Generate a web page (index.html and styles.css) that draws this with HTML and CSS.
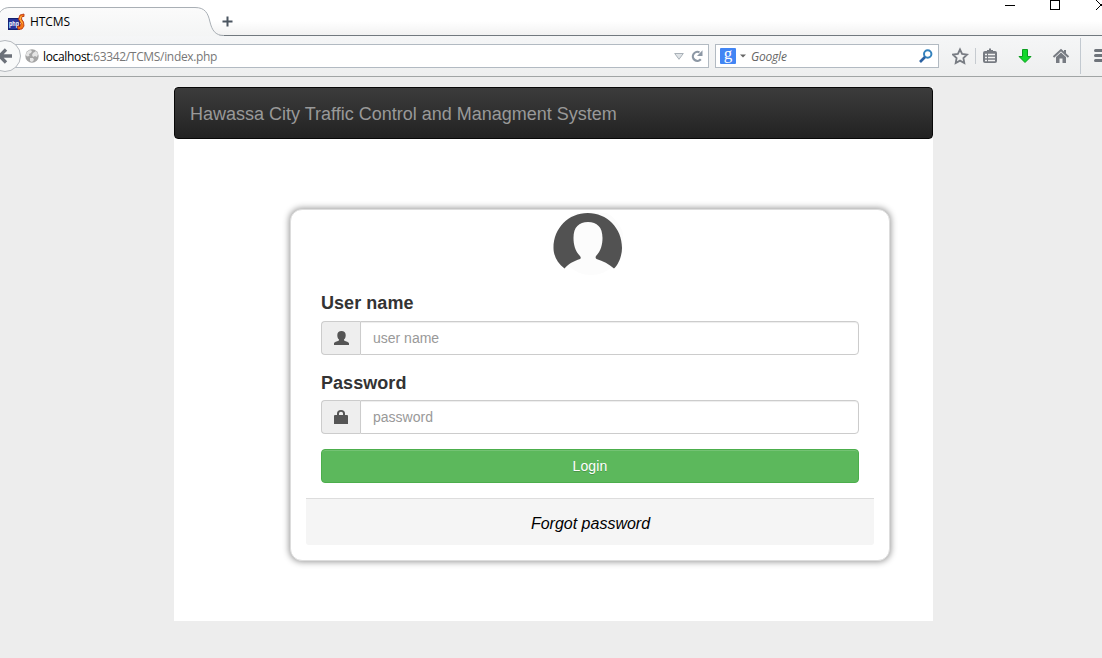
FILE: index.html
```html
<!DOCTYPE html>
<html lang="en">
<head>
<meta charset="utf-8">
<title>HTCMS</title>
<link rel="stylesheet" href="styles.css">
</head>
<body>
<header class="tabstrip">
  <div class="tab">
    <svg class="tab-shape" width="224" height="36" viewBox="0 0 224 36">
      <defs><linearGradient id="tabfill" x1="0" y1="0" x2="0" y2="1"><stop offset="0" stop-color="#fbfbfb"/><stop offset="1" stop-color="#f4f5f5"/></linearGradient></defs>
      <path d="M-2 15C1 10 4 7.5 10 7.5H195C205 7.5 208 13 210 22C212 30 215 35.5 222 35.5V36H-2Z" fill="url(#tabfill)"/>
      <path d="M-2 15C1 10 4 7.5 10 7.5H195C205 7.5 208 13 210 22C212 30 215 35.5 224 35.5" fill="none" stroke="#a9afb5"/>
    </svg>
    <svg class="favicon" width="17" height="18" viewBox="0 0 17 18">
      <rect x="0.5" y="5.500" width="11" height="11" fill="#28349b" stroke="#14206e"/>
      <text class="favicon-text" x="1" y="13" textLength="10" lengthAdjust="spacingAndGlyphs">php</text>
      <path d="M16 1L12 2L10.500 6L13 10.500L12 13.500L9.500 13L10 16.500L14 16L16 13L15.500 9L13.500 6L14 3.500H16Z" fill="#f57a16" stroke="#b62c0b" stroke-width=".8"/>
      <path d="M13.300 3L12 6.500L14.500 10.500" fill="none" stroke="#ffc24a"/>
    </svg>
    <span class="tab-title">HTCMS</span>
  </div>
  <svg class="plus" width="11" height="11" viewBox="0 0 11 11"><path d="M5.500 .5V10.500M.5 5.500H10.500" stroke="#4b5560" stroke-width="2"/></svg>
  <svg class="window-buttons" width="97" height="12" viewBox="0 0 97 12" shape-rendering="crispEdges">
    <path d="M0 5.500H10" stroke="#000"/><rect x="45.500" y=".5" width="9" height="9" fill="none" stroke="#000"/>
    <path d="M91 0L101 10M101 0L91 10" stroke="#000"/>
  </svg>
</header>
<nav class="toolbar">
  <svg class="back" width="22" height="34" viewBox="0 0 22 34">
    <circle cx="5" cy="17" r="15.500" fill="#f8f9f9" stroke="#b4b8bd"/>
    <path d="M0 17H12M6 10.500L-.5 17L6 23.500" fill="none" stroke="#6c7179" stroke-width="3.300"/>
  </svg>
  <div class="url">
    <svg width="14" height="14" viewBox="0 0 14 14"><circle cx="7" cy="7" r="6.700" fill="#a5a5a5"/><path d="M2 3L5 1L7 2L6 4L4 5L4.500 7L2 7.500L.7 6ZM8 4L11 2L13 5L12 8L10 7L8 8L7 6ZM5 9L8 9L9 11L7 13L5 12Z" fill="#e5e5e5"/></svg>
    <span class="address"><b>localhost</b>:63342/TCMS/index.php</span>
    <svg class="url-arrow" width="10" height="7" viewBox="0 0 10 7"><path d="M.7 .5H9.300L5 6.300Z" fill="#dfe3e6" stroke="#a9b1b8"/></svg>
    <svg class="reload" width="12" height="12" viewBox="0 0 12 12"><path d="M9.800 9.300A4.500 4.500 0 1 1 8.500 2.400" fill="none" stroke="#8d98a5" stroke-width="2.200"/><path d="M11.500 .3V6H6Z" fill="#8d98a5"/></svg>
  </div>
  <div class="search">
    <span class="engine">g</span>
    <svg class="caret" width="6" height="4" viewBox="0 0 6 4"><path d="M0 .5H6L3 3.500Z" fill="#666"/></svg>
    <span class="search-text">Google</span>
    <svg class="magnifier" width="14" height="14" viewBox="0 0 14 14"><circle cx="8.700" cy="5" r="3.700" fill="none" stroke="#3482bd" stroke-width="2"/><path d="M6 8L1 13" stroke="#2c61a2" stroke-width="2.600"/></svg>
  </div>
  <svg class="tools" width="150" height="38" viewBox="952 37 150 38">
    <path d="M960 49.500L962.100 54L967 54.600L963.400 58L964.300 63L960 60.600L955.700 63L956.600 58L953 54.600L957.900 54Z" fill="none" stroke="#787c83" stroke-width="1.800"/>
    <path d="M975.500 48V64" stroke="#c6cbd0"/>
    <rect x="983" y="51" width="14" height="12" rx="2" fill="#777b82"/><path d="M987 52V50H989V48.500H991V50H993V52Z" fill="#777b82"/>
    <path d="M985 54.500H987M988 54.500H995M985 57.500H987M988 57.500H995M985 60.500H987M988 60.500H995" stroke="#f2f2f2" stroke-width="1.500"/>
    <path d="M1022.500 49.500H1027.500V56.500H1031L1025 62.500L1019 56.500H1022.500Z" fill="#13d82c" stroke="#0c9d1f"/>
    <path d="M1053.500 57L1061 50L1068.500 57" fill="none" stroke="#777b82" stroke-width="2"/>
    <path d="M1056 57L1061 52.500L1066 57V63H1062.500V58.500H1059.500V63H1056ZM1064 50H1066V54L1064 52Z" fill="#777b82"/>
    <path d="M1080.500 38V74" stroke="#c2c9d0"/>
    <path d="M1095.500 50.500H1104M1095.500 55.500H1104M1095.500 60.500H1104" stroke="#6f747b" stroke-width="3" stroke-linecap="round"/>
  </svg>
</nav>
<main class="container">
  <div class="navbar">Hawassa City Traffic Control and Managment System</div>
  <form class="card">
    <svg class="avatar" width="70" height="62" viewBox="0 0 70 62">
      <circle cx="38" cy="29" r="33" fill="#fcfcfc"/>
      <path d="M11.500 55.500C4 50 .5 42 .5 35C.5 15 15.500 0 34.750 0S69 15 69 35C69 42 66 51 61 55.500C56 51 50 48 43.500 46Q42 45 43 43C48 38 49.500 31 49.500 25C49.500 14 44 9 35 9C26 9 20.500 14 20.500 25C20.500 31 22 38 27 43Q28.500 45 27 46C21 48 15 51 11.500 55.500Z" fill="#525252"/>
    </svg>
    <label class="label" for="user">User name</label>
    <div class="group">
      <span class="addon"><svg width="15" height="14" viewBox="0 0 15 14"><path d="M0 14V12.500C0 11 3 10.500 5 9.500V8.500C3.800 7.500 3.300 6 3.300 4C3.300 1.500 5 0 7.500 0S11.700 1.500 11.700 4C11.700 6 11.200 7.500 10 8.500V9.500C12 10.500 15 11 15 12.500V14Z" fill="#555"/></svg></span>
      <input class="input" id="user" type="text" placeholder="user name">
    </div>
    <label class="label" for="pass">Password</label>
    <div class="group">
      <span class="addon"><svg width="14" height="14" viewBox="0 0 14 14"><path d="M1 5H3V3.500Q3 0 7 0T11 3.500V5H13Q14 5 14 6V14H0V6Q0 5 1 5ZM5 5H9V3.500Q9 1.700 7 1.700T5 3.500Z" fill="#555" fill-rule="evenodd"/></svg></span>
      <input class="input" id="pass" type="password" placeholder="password">
    </div>
    <button class="login" type="button">Login</button>
    <div class="footer">Forgot password</div>
  </form>
</main>
</body>
</html>
```
FILE: styles.css
```css
* { box-sizing: border-box; }
body { margin: 0; height: 658px; overflow: hidden; background: #ededed; font-family: "Liberation Sans", Arial, sans-serif; }
svg { display: block; flex: none; }
.tabstrip { height: 36px; display: flex; background: linear-gradient(#fff 60%, #f2f2f2); border-bottom: 1px solid #72797f; }
.tab { position: relative; width: 221px; height: 36px; display: flex; align-items: flex-start; padding: 13px 0 0 8px; }
.tab-shape { position: absolute; left: 0; top: 0; }
.favicon { position: relative; margin-right: 5px; }
.favicon-text { fill: #fff; font: bold 8px "Liberation Sans", Arial, sans-serif; }
.tab-title { position: relative; font: 12px/18px "Open Sans", sans-serif; letter-spacing: -0.05px; color: #000; }
.plus { margin: 16px 0 0 1px; }
.window-buttons { margin-left: auto; }
.toolbar { height: 41px; display: flex; align-items: flex-start; background: linear-gradient(#f5f6f7, #eeefef); border-bottom: 1px solid #a1a5a5; }
.back { position: relative; margin-top: 3px; }
.url, .search { height: 24px; margin-top: 8px; display: flex; align-items: center; background: #fff; border: 1px solid #b2bac2; }
.url { width: 694px; margin-left: -7px; padding: 0 5px 0 10px; border-left: 0; }
.address { margin: 0 auto 0 4px; padding-top: 2px; font: 12px/20px "Open Sans", sans-serif; letter-spacing: -0.33px; color: #777; }
.address b { font-weight: 400; color: #000; }
.reload { margin-left: 7px; }
.search { width: 224px; margin-left: 6px; padding: 0 5px 0 4px; }
.engine { width: 16px; height: 16px; border-radius: 1px; background: #4285f4; color: #fff; font: 17px/12px "Liberation Serif", serif; text-align: center; }
.caret { margin: 0 5px 0 4px; }
.search-text { padding-top: 2px; font: italic 12px/20px "Open Sans", sans-serif; letter-spacing: -0.2px; color: #666; }
.magnifier { margin-left: auto; }
.tools { margin: 1px 0 0 13px; }
.container { width: 759px; height: 534px; margin: 10px 0 0 174px; background: #fff; }
.navbar { height: 52px; padding-left: 15px; border: 1px solid #080808; border-radius: 4px; background: linear-gradient(#3c3c3c, #222); color: #999; font-size: 18px; line-height: 53px; }
.card { width: 600px; height: 352px; margin: 70px 0 0 116px; padding: 3px 15px 15px; display: flex; flex-direction: column; border: 1px solid #ddd; border-radius: 12px; background: #fff; box-shadow: 0 0 6px 1px #999; }
.avatar { margin: 0 0 0 247px; }
.label { margin: 15px 0 0 15px; height: 32px; color: #333; font-size: 18px; font-weight: 700; line-height: 26px; letter-spacing: 0.05px; }
.group { display: flex; height: 34px; margin: 0 15px; flex: none; }
.addon { width: 39px; display: flex; align-items: center; justify-content: center; border: 1px solid #ccc; border-right: 0; border-radius: 4px 0 0 4px; background: #eee; }
.input { flex: 1; min-width: 0; padding: 6px 12px; border: 1px solid #ccc; border-radius: 0 4px 4px 0; outline: 0; box-shadow: inset 0 1px 1px #00000013; color: #555; font: 14px/20px "Liberation Sans", Arial, sans-serif; }
.input::placeholder { color: #999; opacity: 1; }
.group + .label { margin-top: 15px; height: 30px; }
.login { height: 34px; flex: none; margin: 15px 15px 0; border: 1px solid #4cae4c; border-radius: 4px; background: #5cb85c; box-shadow: inset 0 1px 0 #ffffff26; color: #fff; font: 14px/20px "Liberation Sans", Arial, sans-serif; letter-spacing: 0.15px; text-shadow: 0 1px 0 #0003; }
.footer { height: 47px; flex: none; margin-top: 15px; padding-left: 1px; border-top: 1px solid #ddd; border-radius: 0 0 3px 3px; background: #f5f5f5; color: #000; font-size: 16px; font-style: italic; line-height: 49px; text-align: center; }
```
